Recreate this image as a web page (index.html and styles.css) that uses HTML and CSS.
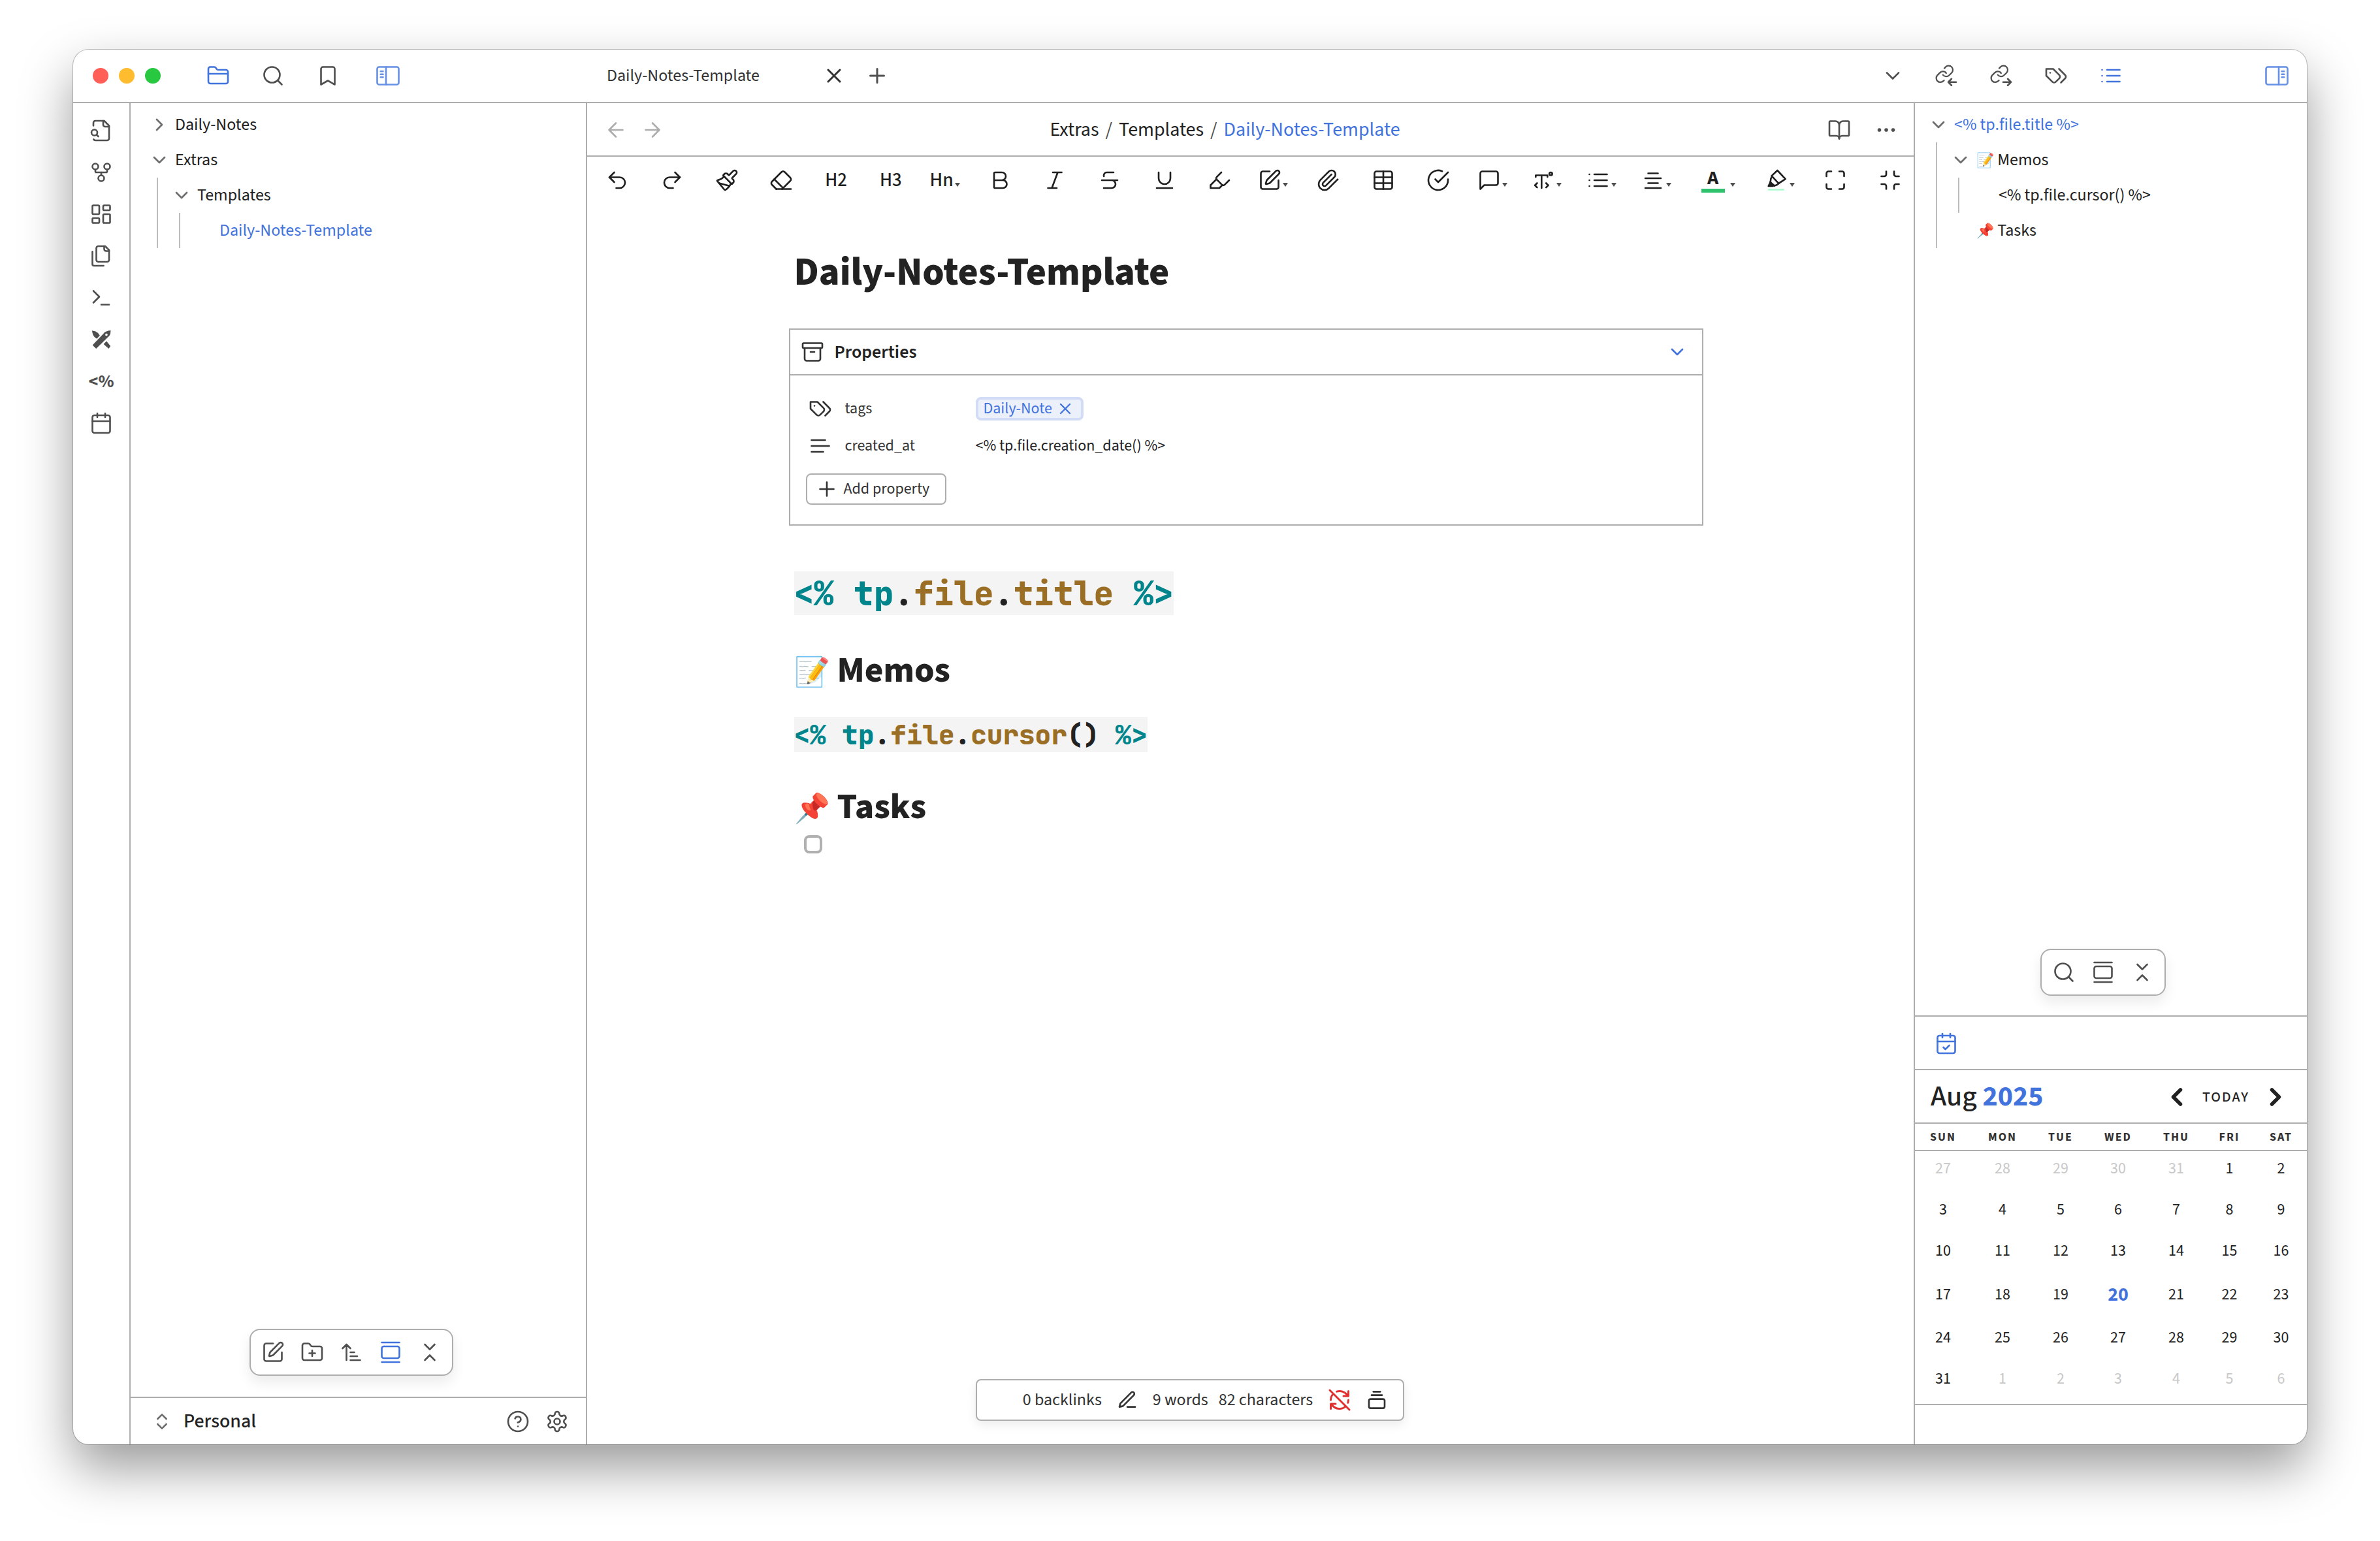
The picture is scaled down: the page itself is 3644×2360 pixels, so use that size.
FILE: index.html
```html
<!DOCTYPE html>
<html lang="en">
<head>
<meta charset="utf-8">
<title>Daily-Notes-Template - Personal</title>
<meta name="viewport" content="width=device-width, initial-scale=1">
<link rel="stylesheet" href="styles.css">
</head>
<body>
<svg class="sprite" aria-hidden="true">
  <symbol id="folder" viewBox="0 0 24 24"><path d="M20 20a2 2 0 0 0 2-2V8a2 2 0 0 0-2-2h-7.9a2 2 0 0 1-1.69-.9L9.6 3.9A2 2 0 0 0 7.93 3H4a2 2 0 0 0-2 2v13a2 2 0 0 0 2 2Z"/><path d="M2 10h20"/></symbol>
  <symbol id="search" viewBox="0 0 24 24"><circle cx="11" cy="11" r="8"/><path d="m21 21-4.3-4.3"/></symbol>
  <symbol id="bookmark" viewBox="0 0 24 24"><path d="m19 21-7-4-7 4V5a2 2 0 0 1 2-2h10a2 2 0 0 1 2 2v16z"/></symbol>
  <symbol id="sidebar-left" viewBox="0 0 24 24"><rect x="1" y="3" width="22" height="18" rx="2"/><path d="M10 3v18M4.5 7.5H7M4.5 10.5H7M4.5 13.5H7"/></symbol>
  <symbol id="sidebar-right" viewBox="0 0 24 24"><rect x="1" y="3" width="22" height="18" rx="2"/><path d="M14 3v18M17 7.5h2.5M17 10.5h2.5M17 13.5h2.5"/></symbol>
  <symbol id="x" viewBox="0 0 24 24"><path d="M18 6 6 18M6 6l12 12"/></symbol>
  <symbol id="plus" viewBox="0 0 24 24"><path d="M5 12h14M12 5v14"/></symbol>
  <symbol id="chevron-down" viewBox="0 0 24 24"><path d="m6 9 6 6 6-6"/></symbol>
  <symbol id="chevron-right" viewBox="0 0 24 24"><path d="m9 18 6-6-6-6"/></symbol>
  <symbol id="chevron-left" viewBox="0 0 24 24"><path d="m15 18-6-6 6-6"/></symbol>
  <symbol id="link-in" viewBox="0 0 24 24"><g transform="scale(.85)"><path d="M10 13a5 5 0 0 0 7.54.54l3-3a5 5 0 0 0-7.07-7.07l-1.72 1.71"/><path d="M14 11a5 5 0 0 0-7.54-.54l-3 3a5 5 0 0 0 7.07 7.07l.9-.9"/></g><path d="M22 18.5h-8M17.3 15.2 14 18.5l3.3 3.3"/></symbol>
  <symbol id="link-out" viewBox="0 0 24 24"><g transform="scale(.85)"><path d="M10 13a5 5 0 0 0 7.54.54l3-3a5 5 0 0 0-7.07-7.07l-1.72 1.71"/><path d="M14 11a5 5 0 0 0-7.54-.54l-3 3a5 5 0 0 0 7.07 7.07l.9-.9"/></g><path d="M14 18.5h8M18.7 15.2l3.3 3.3-3.3 3.3"/></symbol>
  <symbol id="tags" viewBox="0 0 24 24"><path d="M9 5H2v7l6.29 6.29c.94.94 2.48.94 3.42 0l3.58-3.58c.94-.94.94-2.48 0-3.42L9 5Z"/><path d="M6 9.01V9"/><path d="m15 5 6.3 6.3a2.4 2.4 0 0 1 0 3.4L17 19"/></symbol>
  <symbol id="list" viewBox="0 0 24 24"><path d="M8 6h13M8 12h13M8 18h13M3 6h.01M3 12h.01M3 18h.01"/></symbol>
  <symbol id="file-search" viewBox="0 0 24 24"><path d="M14 2v4a2 2 0 0 0 2 2h4"/><path d="M4.27 21a2 2 0 0 0 1.73 1h12a2 2 0 0 0 2-2V7l-5-5H6a2 2 0 0 0-2 2v3"/><path d="m9 18-1.5-1.5"/><circle cx="5" cy="14" r="3"/></symbol>
  <symbol id="fork" viewBox="0 0 24 24"><circle cx="12" cy="18" r="3"/><circle cx="6" cy="6" r="3"/><circle cx="18" cy="6" r="3"/><path d="M18 9v2c0 .6-.4 1-1 1H7c-.6 0-1-.4-1-1V9"/><path d="M12 12v3"/></symbol>
  <symbol id="dashboard" viewBox="0 0 24 24"><rect x="3" y="3" width="7" height="9" rx="1"/><rect x="14" y="3" width="7" height="5" rx="1"/><rect x="14" y="12" width="7" height="9" rx="1"/><rect x="3" y="16" width="7" height="5" rx="1"/></symbol>
  <symbol id="files" viewBox="0 0 24 24"><path d="M20 7h-3a2 2 0 0 1-2-2V2"/><path d="M9 18a2 2 0 0 1-2-2V4a2 2 0 0 1 2-2h7l4 4v10a2 2 0 0 1-2 2Z"/><path d="M3 7.6v12.8A1.6 1.6 0 0 0 4.6 22h9.8"/></symbol>
  <symbol id="terminal" viewBox="0 0 24 24"><path d="m4 17 6-6-6-6M12 19h8"/></symbol>
  <symbol id="pens" viewBox="0 0 24 24"><g fill="currentColor" stroke="none"><path fill-rule="evenodd" d="M3.1 17.6 14.6 5.6Q16 3.2 21.6 2.6 21.8 8 18.4 10L6.8 21.4zM17.3 5.9a1.2 1.2 0 1 0 .01 0z"/><path d="M2.7 2.9Q8.5 3.5 10.6 7.8L7.6 11.2Q3 9 2.7 2.9zM14.4 16.6l3-3 4.1 5-1.9 2.7z"/></g></symbol>
  <symbol id="calendar" viewBox="0 0 24 24"><path d="M8 2v4M16 2v4M3 10h18"/><rect x="3" y="4" width="18" height="18" rx="2"/></symbol>
  <symbol id="calendar-check" viewBox="0 0 24 24"><path d="M8 2v4M16 2v4M3 10h18M9 16l2 2 4-4"/><rect x="3" y="4" width="18" height="18" rx="2"/></symbol>
  <symbol id="arrow-left" viewBox="0 0 24 24"><path d="m12 19-7-7 7-7M19 12H5"/></symbol>
  <symbol id="arrow-right" viewBox="0 0 24 24"><path d="M5 12h14M12 5l7 7-7 7"/></symbol>
  <symbol id="book" viewBox="0 0 24 24"><path d="M12 7v14"/><path d="M3 18a1 1 0 0 1-1-1V4a1 1 0 0 1 1-1h5a4 4 0 0 1 4 4 4 4 0 0 1 4-4h5a1 1 0 0 1 1 1v13a1 1 0 0 1-1 1h-6a3 3 0 0 0-3 3 3 3 0 0 0-3-3z"/></symbol>
  <symbol id="more" viewBox="0 0 24 24"><g fill="currentColor"><circle cx="12" cy="12" r="1"/><circle cx="19" cy="12" r="1"/><circle cx="5" cy="12" r="1"/></g></symbol>
  <symbol id="undo" viewBox="0 0 24 24"><path d="M9 14 4 9l5-5"/><path d="M4 9h10.5a5.5 5.5 0 0 1 0 11H11"/></symbol>
  <symbol id="redo" viewBox="0 0 24 24"><path d="m15 14 5-5-5-5"/><path d="M20 9H9.5a5.5 5.5 0 0 0 0 11H13"/></symbol>
  <symbol id="brush" viewBox="0 0 24 24"><path d="m14.622 17.897-10.68-2.913"/><path d="M18.376 2.622a1 1 0 1 1 3.002 3.002L17.36 9.643a.5.5 0 0 0 0 .707l.944.944a2.41 2.41 0 0 1 0 3.408l-.944.944a.5.5 0 0 1-.707 0L8.354 7.348a.5.5 0 0 1 0-.707l.944-.944a2.41 2.41 0 0 1 3.408 0l.944.944a.5.5 0 0 0 .707 0z"/><path d="M9 8c-1.804 2.71-3.97 3.46-6.583 3.948a.507.507 0 0 0-.302.819l7.32 8.883a1 1 0 0 0 1.185.204C12.735 20.405 16 16.792 16 15"/></symbol>
  <symbol id="eraser" viewBox="0 0 24 24"><path d="m7 21-4.3-4.3c-1-1-1-2.5 0-3.4l9.6-9.6c1-1 2.5-1 3.4 0l5.6 5.6c1 1 1 2.5 0 3.4L13 21"/><path d="M22 21H7M5 11l9 9"/></symbol>
  <symbol id="bold" viewBox="0 0 24 24"><path d="M6 12h9a4 4 0 0 1 0 8H7a1 1 0 0 1-1-1V5a1 1 0 0 1 1-1h7a4 4 0 0 1 0 8"/></symbol>
  <symbol id="italic" viewBox="0 0 24 24"><path d="M19 4h-9M14 20H5M15 4 9 20"/></symbol>
  <symbol id="strike" viewBox="0 0 24 24"><path d="M16 4H9a3 3 0 0 0-2.83 4M14 12a4 4 0 0 1 0 8H6M4 12h16"/></symbol>
  <symbol id="underline" viewBox="0 0 24 24"><path d="M6 4v6a6 6 0 0 0 12 0V4M4 20h16"/></symbol>
  <symbol id="highlighter" viewBox="0 0 24 24"><path d="m9 11-6 6v3h9l3-3"/><path d="m22 12-4.6 4.6a2 2 0 0 1-2.8 0l-5.2-5.2a2 2 0 0 1 0-2.8L14 4"/></symbol>
  <symbol id="edit" viewBox="0 0 24 24"><path d="M12 3H5a2 2 0 0 0-2 2v14a2 2 0 0 0 2 2h14a2 2 0 0 0 2-2v-7"/><path d="M18.375 2.625a1 1 0 0 1 3 3l-9.013 9.014a2 2 0 0 1-.853.505l-2.873.84a.5.5 0 0 1-.62-.62l.84-2.873a2 2 0 0 1 .506-.852z"/></symbol>
  <symbol id="clip" viewBox="0 0 24 24"><path d="m21.44 11.05-9.19 9.19a6 6 0 0 1-8.49-8.49l8.57-8.57A4 4 0 1 1 18 8.84l-8.59 8.57a2 2 0 0 1-2.83-2.83l8.49-8.48"/></symbol>
  <symbol id="table" viewBox="0 0 24 24"><rect x="3" y="3" width="18" height="18" rx="2"/><path d="M12 3v18M3 9h18M3 15h18"/></symbol>
  <symbol id="check" viewBox="0 0 24 24"><path d="M22 11.08V12a10 10 0 1 1-5.93-9.14M9 11l3 3L22 4"/></symbol>
  <symbol id="comment" viewBox="0 0 24 24"><path d="M21 15a2 2 0 0 1-2 2H7l-4 4V5a2 2 0 0 1 2-2h14a2 2 0 0 1 2 2z"/></symbol>
  <symbol id="text-style" viewBox="0 0 24 24"><path d="M4.2 8.6V7h12v1.600M10.200 7v13M5.600 15l-2.200 2.200 2.200 2.200M14.800 15l2.200 2.200-2.200 2.200"/><circle cx="19.600" cy="5.500" r="1.500"/></symbol>
  <symbol id="align-center" viewBox="0 0 24 24"><path d="M7 5h10M4 10h16M7 15h10M4 20h16"/></symbol>
  <symbol id="marker" viewBox="0 0 24 24"><path d="m12.9 2 8.2 8.7-6.9 4.6L7 7.6z"/><path d="M7.2 8.5c-1.8 2.6-.6 3.4-1.6 5.4l4.2 3.9c1.6-1 2.4-.2 4.4-2.5"/><path fill="currentColor" d="M5.6 14.2 3.8 18h4.4l1-1z"/><path class="marker-bar" d="M4 21.6h15"/></symbol>
  <symbol id="maximize" viewBox="0 0 24 24"><path d="M8 3H5a2 2 0 0 0-2 2v3M21 8V5a2 2 0 0 0-2-2h-3M3 16v3a2 2 0 0 0 2 2h3M16 21h3a2 2 0 0 0 2-2v-3"/></symbol>
  <symbol id="minimize" viewBox="0 0 24 24"><path d="M8 3v3a2 2 0 0 1-2 2H3M21 8h-3a2 2 0 0 1-2-2V3M3 16h3a2 2 0 0 1 2 2v3M16 21v-3a2 2 0 0 1 2-2h3"/></symbol>
  <symbol id="archive" viewBox="0 0 24 24"><rect x="2" y="3" width="20" height="5" rx="1"/><path d="M4 8v11a2 2 0 0 0 2 2h12a2 2 0 0 0 2-2V8M10 12h4"/></symbol>
  <symbol id="lines" viewBox="0 0 24 24"><path d="M17 6H3M21 12H3M15 18H3"/></symbol>
  <symbol id="folder-plus" viewBox="0 0 24 24"><path d="M12 10v6M9 13h6"/><path d="M20 20a2 2 0 0 0 2-2V8a2 2 0 0 0-2-2h-7.9a2 2 0 0 1-1.69-.9L9.6 3.9A2 2 0 0 0 7.93 3H4a2 2 0 0 0-2 2v13a2 2 0 0 0 2 2Z"/></symbol>
  <symbol id="sort" viewBox="0 0 24 24"><path d="m3 8 4-4 4 4M7 4v16M11 12h4M11 16h7M11 20h10"/></symbol>
  <symbol id="gallery" viewBox="0 0 24 24"><path d="M3 2h18M3 22h18"/><rect x="3" y="6" width="18" height="12" rx="2"/></symbol>
  <symbol id="collapse" viewBox="0 0 24 24"><path d="m7 20 5-5 5 5M7 4l5 5 5-5"/></symbol>
  <symbol id="up-down" viewBox="0 0 24 24"><path d="m7 15 5 5 5-5M7 9l5-5 5 5"/></symbol>
  <symbol id="help" viewBox="0 0 24 24"><circle cx="12" cy="12" r="10"/><path d="M9.09 9a3 3 0 0 1 5.83 1c0 2-3 3-3 3M12 17h.01"/></symbol>
  <symbol id="gear" viewBox="0 0 24 24"><path d="M12.22 2h-.44a2 2 0 0 0-2 2v.18a2 2 0 0 1-1 1.73l-.43.25a2 2 0 0 1-2 0l-.15-.08a2 2 0 0 0-2.73.73l-.22.38a2 2 0 0 0 .73 2.73l.15.1a2 2 0 0 1 1 1.72v.51a2 2 0 0 1-1 1.74l-.15.09a2 2 0 0 0-.73 2.73l.22.38a2 2 0 0 0 2.73.73l.15-.08a2 2 0 0 1 2 0l.43.25a2 2 0 0 1 1 1.73V20a2 2 0 0 0 2 2h.44a2 2 0 0 0 2-2v-.18a2 2 0 0 1 1-1.73l.43-.25a2 2 0 0 1 2 0l.15.08a2 2 0 0 0 2.73-.73l.22-.39a2 2 0 0 0-.73-2.73l-.15-.08a2 2 0 0 1-1-1.74v-.5a2 2 0 0 1 1-1.74l.15-.09a2 2 0 0 0 .73-2.73l-.22-.38a2 2 0 0 0-2.73-.73l-.15.08a2 2 0 0 1-2 0l-.43-.25a2 2 0 0 1-1-1.73V4a2 2 0 0 0-2-2z"/><circle cx="12" cy="12" r="3"/></symbol>
  <symbol id="pencil" viewBox="0 0 24 24"><path d="M12 20h9M16.5 3.5a2.12 2.12 0 0 1 3 3L7 19l-4 1 1-4Z"/></symbol>
  <symbol id="sync-off" viewBox="0 0 24 24"><path d="M21 8 18.74 5.74A9.75 9.75 0 0 0 12 3c-1 0-1.97.16-2.87.47M8 16H3v5M3 12c0-2.49 1-4.74 2.64-6.36M3 16l2.26 2.26A9.75 9.75 0 0 0 12 21c2.49 0 4.74-1 6.36-2.64M21 12c0 1-.16 1.97-.47 2.87M21 3v5h-5M22 22 2 2"/></symbol>
  <symbol id="stack" viewBox="0 0 24 24"><path d="M8 2.5h8M6 6.5h12"/><rect x="3" y="11" width="18" height="10.5" rx="2"/></symbol>
</svg>

<div class="window">
  <header class="titlebar">
    <div class="titlebar-left">
      <div class="lights"><button class="light light-close" aria-label="Close window"></button><button class="light light-min" aria-label="Minimize window"></button><button class="light light-max" aria-label="Zoom window"></button></div>
      <nav class="pane-tabs" aria-label="Left sidebar tabs">
        <button class="icon-button accent" aria-label="Files"><svg class="icon"><use href="#folder"/></svg></button>
        <button class="icon-button" aria-label="Search"><svg class="icon"><use href="#search"/></svg></button>
        <button class="icon-button" aria-label="Bookmarks"><svg class="icon"><use href="#bookmark"/></svg></button>
      </nav>
      <button class="icon-button toggle" aria-label="Collapse left sidebar"><svg class="icon"><use href="#sidebar-left"/></svg></button>
    </div>
    <div class="titlebar-center">
      <div class="tab"><span class="tab-title">Daily-Notes-Template</span><button class="tab-close" aria-label="Close tab"><svg class="icon"><use href="#x"/></svg></button></div>
      <button class="new-tab" aria-label="New tab"><svg class="icon"><use href="#plus"/></svg></button>
      <button class="tab-list" aria-label="Tab list"><svg class="icon"><use href="#chevron-down"/></svg></button>
    </div>
    <div class="titlebar-right">
      <button class="icon-button" aria-label="Backlinks"><svg class="icon"><use href="#link-in"/></svg></button>
      <button class="icon-button" aria-label="Outgoing links"><svg class="icon"><use href="#link-out"/></svg></button>
      <button class="icon-button" aria-label="Tags"><svg class="icon"><use href="#tags"/></svg></button>
      <button class="icon-button accent" aria-label="Outline"><svg class="icon"><use href="#list"/></svg></button>
      <button class="icon-button toggle toggle-right" aria-label="Collapse right sidebar"><svg class="icon"><use href="#sidebar-right"/></svg></button>
    </div>
  </header>

  <div class="workspace">
    <nav class="ribbon" aria-label="Ribbon">
      <button class="ribbon-button" aria-label="Open quick switcher"><svg class="icon"><use href="#file-search"/></svg></button>
      <button class="ribbon-button" aria-label="Open graph view"><svg class="icon"><use href="#fork"/></svg></button>
      <button class="ribbon-button" aria-label="Create new canvas"><svg class="icon"><use href="#dashboard"/></svg></button>
      <button class="ribbon-button" aria-label="Insert template"><svg class="icon"><use href="#files"/></svg></button>
      <button class="ribbon-button" aria-label="Open command palette"><svg class="icon"><use href="#terminal"/></svg></button>
      <button class="ribbon-button" aria-label="New drawing"><svg class="icon"><use href="#pens"/></svg></button>
      <button class="ribbon-button" aria-label="Templater">&lt;%</button>
      <button class="ribbon-button" aria-label="Open today's daily note"><svg class="icon"><use href="#calendar"/></svg></button>
    </nav>

    <aside class="sidebar sidebar-left">
      <ul class="tree">
        <li><button class="tree-row"><svg class="icon chevron"><use href="#chevron-right"/></svg>Daily-Notes</button></li>
        <li><button class="tree-row"><svg class="icon chevron"><use href="#chevron-down"/></svg>Extras</button>
          <ul class="tree-children">
            <li><button class="tree-row"><svg class="icon chevron"><use href="#chevron-down"/></svg>Templates</button>
              <ul class="tree-children">
                <li><a class="tree-row leaf accent" href="#note">Daily-Notes-Template</a></li>
              </ul>
            </li>
          </ul>
        </li>
      </ul>
      <div class="float-bar float-bar-left">
        <button class="float-button" aria-label="New note"><svg class="icon"><use href="#edit"/></svg></button>
        <button class="float-button" aria-label="New folder"><svg class="icon"><use href="#folder-plus"/></svg></button>
        <button class="float-button" aria-label="Change sort order"><svg class="icon"><use href="#sort"/></svg></button>
        <button class="float-button accent" aria-label="Auto-reveal current file"><svg class="icon"><use href="#gallery"/></svg></button>
        <button class="float-button" aria-label="Collapse all"><svg class="icon"><use href="#collapse"/></svg></button>
      </div>
      <footer class="vault">
        <button class="vault-switch"><svg class="icon chevron"><use href="#up-down"/></svg>Personal</button>
        <button class="float-button" aria-label="Help"><svg class="icon"><use href="#help"/></svg></button>
        <button class="float-button" aria-label="Settings"><svg class="icon"><use href="#gear"/></svg></button>
      </footer>
    </aside>

    <main class="center">
      <div class="view-header">
        <div class="history"><button class="history-button" aria-label="Back" disabled><svg class="icon"><use href="#arrow-left"/></svg></button><button class="history-button" aria-label="Forward" disabled><svg class="icon"><use href="#arrow-right"/></svg></button></div>
        <nav class="breadcrumb" aria-label="Path"><a href="#extras">Extras</a><span class="slash">/</span><a href="#templates">Templates</a><span class="slash">/</span><a class="accent" href="#note">Daily-Notes-Template</a></nav>
        <div class="view-actions"><button class="view-button" aria-label="Reading view"><svg class="icon"><use href="#book"/></svg></button><button class="view-button" aria-label="More options"><svg class="icon"><use href="#more"/></svg></button></div>
      </div>
      <div class="format-bar" role="toolbar" aria-label="Formatting">
        <button class="format-button" aria-label="Undo"><svg class="icon"><use href="#undo"/></svg></button>
        <button class="format-button" aria-label="Redo"><svg class="icon"><use href="#redo"/></svg></button>
        <button class="format-button" aria-label="Format brush"><svg class="icon"><use href="#brush"/></svg></button>
        <button class="format-button" aria-label="Clear formatting"><svg class="icon"><use href="#eraser"/></svg></button>
        <button class="format-button">H2</button>
        <button class="format-button">H3</button>
        <button class="format-button has-menu">Hn<span class="caret"></span></button>
        <button class="format-button" aria-label="Bold"><svg class="icon"><use href="#bold"/></svg></button>
        <button class="format-button" aria-label="Italic"><svg class="icon"><use href="#italic"/></svg></button>
        <button class="format-button" aria-label="Strikethrough"><svg class="icon"><use href="#strike"/></svg></button>
        <button class="format-button" aria-label="Underline"><svg class="icon"><use href="#underline"/></svg></button>
        <button class="format-button" aria-label="Highlight"><svg class="icon"><use href="#highlighter"/></svg></button>
        <button class="format-button" aria-label="Insert"><svg class="icon"><use href="#edit"/></svg><span class="caret"></span></button>
        <button class="format-button" aria-label="Attach file"><svg class="icon"><use href="#clip"/></svg></button>
        <button class="format-button" aria-label="Insert table"><svg class="icon"><use href="#table"/></svg></button>
        <button class="format-button" aria-label="Task"><svg class="icon"><use href="#check"/></svg></button>
        <button class="format-button" aria-label="Callout"><svg class="icon"><use href="#comment"/></svg><span class="caret"></span></button>
        <button class="format-button" aria-label="Text style"><svg class="icon"><use href="#text-style"/></svg><span class="caret"></span></button>
        <button class="format-button" aria-label="List"><svg class="icon"><use href="#list"/></svg><span class="caret"></span></button>
        <button class="format-button" aria-label="Align"><svg class="icon"><use href="#align-center"/></svg><span class="caret"></span></button>
        <button class="format-button wide" aria-label="Font colour"><span class="font-color">A</span><span class="caret"></span></button>
        <button class="format-button" aria-label="Background colour"><svg class="icon"><use href="#marker"/></svg><span class="caret"></span></button>
        <button class="format-button" aria-label="Full screen"><svg class="icon"><use href="#maximize"/></svg></button>
        <button class="format-button" aria-label="Exit full screen"><svg class="icon"><use href="#minimize"/></svg></button>
      </div>

      <article class="note" id="note">
        <h1 class="note-title">Daily-Notes-Template</h1>
        <section class="properties">
          <button class="properties-head"><svg class="icon"><use href="#archive"/></svg><span class="properties-title">Properties</span><svg class="icon chevron accent"><use href="#chevron-down"/></svg></button>
          <div class="properties-body">
            <div class="property"><svg class="icon"><use href="#tags"/></svg><span class="property-name">tags</span><span class="pill">Daily-Note<button class="pill-remove" aria-label="Remove tag"><svg class="icon"><use href="#x"/></svg></button></span></div>
            <div class="property"><svg class="icon"><use href="#lines"/></svg><label class="property-name" for="created">created_at</label><input class="property-value" id="created" type="text" value="&lt;% tp.file.creation_date() %&gt;"></div>
            <button class="add-property"><svg class="icon"><use href="#plus"/></svg>Add property</button>
          </div>
        </section>
        <h1 class="code-heading"><code class="code"><span class="tok-tag">&lt;%</span> <span class="tok-tag">tp</span>.<span class="tok-prop">file</span>.<span class="tok-prop">title</span> <span class="tok-tag">%&gt;</span></code></h1>
        <h2 class="heading heading-memos"><span class="emoji">📝</span> Memos</h2>
        <h3 class="code-subheading"><code class="code"><span class="tok-tag">&lt;%</span> <span class="tok-tag">tp</span>.<span class="tok-prop">file</span>.<span class="tok-prop">cursor</span>() <span class="tok-tag">%&gt;</span></code></h3>
        <h2 class="heading heading-tasks"><span class="emoji">📌</span> Tasks</h2>
        <input class="task" type="checkbox" aria-label="Empty task">
      </article>
    </main>

    <aside class="sidebar sidebar-right">
      <ul class="tree outline">
        <li><button class="tree-row accent"><svg class="icon chevron"><use href="#chevron-down"/></svg>&lt;% tp.file.title %&gt;</button>
          <ul class="tree-children">
            <li><button class="tree-row"><svg class="icon chevron"><use href="#chevron-down"/></svg><span><span class="emoji">📝</span> Memos</span></button>
              <ul class="tree-children">
                <li><a class="tree-row leaf" href="#note">&lt;% tp.file.cursor() %&gt;</a></li>
              </ul>
            </li>
            <li><a class="tree-row leaf" href="#note"><span><span class="emoji">📌</span> Tasks</span></a></li>
          </ul>
        </li>
      </ul>
      <div class="float-bar float-bar-right">
        <button class="float-button" aria-label="Search headings"><svg class="icon"><use href="#search"/></svg></button>
        <button class="float-button" aria-label="Auto-scroll"><svg class="icon"><use href="#gallery"/></svg></button>
        <button class="float-button" aria-label="Collapse all"><svg class="icon"><use href="#collapse"/></svg></button>
      </div>
      <div class="calendar-tabs"><button class="icon-button accent" aria-label="Calendar"><svg class="icon"><use href="#calendar-check"/></svg></button></div>
      <div class="calendar-head">
        <h2 class="month">Aug <span class="year">2025</span></h2>
        <button class="month-step" aria-label="Previous month"><svg class="icon"><use href="#chevron-left"/></svg></button>
        <button class="today-button">TODAY</button>
        <button class="month-step" aria-label="Next month"><svg class="icon"><use href="#chevron-right"/></svg></button>
      </div>
      <table class="calendar">
        <colgroup><col class="col-sun"><col class="col-mon"><col class="col-tue"><col class="col-wed"><col class="col-thu"><col class="col-fri"><col class="col-sat"></colgroup>
        <thead><tr><th>SUN</th><th>MON</th><th>TUE</th><th>WED</th><th>THU</th><th>FRI</th><th>SAT</th></tr></thead>
        <tbody>
          <tr><td class="out">27</td><td class="out">28</td><td class="out">29</td><td class="out">30</td><td class="out">31</td><td>1</td><td>2</td></tr>
          <tr><td>3</td><td>4</td><td>5</td><td>6</td><td>7</td><td>8</td><td>9</td></tr>
          <tr><td>10</td><td>11</td><td>12</td><td>13</td><td>14</td><td>15</td><td>16</td></tr>
          <tr><td>17</td><td>18</td><td>19</td><td class="today">20</td><td>21</td><td>22</td><td>23</td></tr>
          <tr><td>24</td><td>25</td><td>26</td><td>27</td><td>28</td><td>29</td><td>30</td></tr>
          <tr><td>31</td><td class="out">1</td><td class="out">2</td><td class="out">3</td><td class="out">4</td><td class="out">5</td><td class="out">6</td></tr>
        </tbody>
      </table>
      <div class="sidebar-foot"></div>
    </aside>
  </div>

  <div class="status-bar" role="status">
    <span>0 backlinks</span>
    <svg class="icon icon-small"><use href="#pencil"/></svg>
    <span>9 words</span>
    <span class="status-chars">82 characters</span>
    <svg class="icon status-sync"><use href="#sync-off"/></svg>
    <svg class="icon icon-small"><use href="#stack"/></svg>
  </div>
</div>
</body>
</html>
```

FILE: styles.css
```css
:root {
  --line: #adadad;
  --guide: #bdbdbd;
  --text: #222222;
  --text-soft: #333333;
  --icon: #4f4f4f;
  --accent: #4273dc;
  --sans: "Source Sans 3", "Noto Sans CJK SC", "Noto Sans", sans-serif;
  --mono: "JetBrains Mono", "Liberation Mono", monospace;
}

* { box-sizing: border-box; }

body {
  margin: 0;
  min-height: 100vh;
  padding: 76px 112px 148px;
  display: flex;
  flex-direction: column;
  background: #ffffff;
  color: var(--text);
  font: 400 26px/34px var(--sans);
}

button, input { font: inherit; color: inherit; }

button {
  margin: 0;
  padding: 0;
  border: 0;
  background: none;
  display: flex;
  align-items: center;
  justify-content: center;
}

a { color: inherit; text-decoration: none; }
ul { list-style: none; margin: 0; padding: 0; }
h1, h2, h3 { margin: 0; }

.sprite { position: absolute; width: 0; height: 0; }

.icon {
  flex: none;
  width: 36px;
  height: 36px;
  fill: none;
  stroke: currentColor;
  stroke-width: 1.75;
  stroke-linecap: round;
  stroke-linejoin: round;
}
.icon-small { width: 32px; height: 32px; }

.chevron { width: 32px; height: 32px; color: #6e6e6e; stroke-width: 2; }

.window {
  position: relative;
  flex: 1;
  display: flex;
  flex-direction: column;
  border-radius: 24px;
  background: #ffffff;
  box-shadow: 0 0 0 1px rgba(0, 0, 0, .25), 0 36px 80px rgba(0, 0, 0, .4);
}

/* Title bar */
.titlebar {
  flex: none;
  display: flex;
  height: 82px;
  border-bottom: 2px solid var(--line);
  color: var(--icon);
}
.titlebar-left { flex: none; width: 787px; padding-left: 30px; display: flex; align-items: center; }
.lights { display: flex; gap: 16px; margin-right: 46px; }
.light { width: 24px; height: 24px; border-radius: 50%; }
.light-close { background: #ff5f57; }
.light-min { background: #febc2e; }
.light-max { background: #28c840; }
.pane-tabs { display: flex; margin-right: 8px; }
.icon-button { width: 84px; height: 64px; color: var(--icon); }
.accent, .icon-button.accent, .chevron.accent { color: var(--accent); }
.icon-button.toggle { color: #6790e4; }

.titlebar-center { flex: 1; display: flex; align-items: center; color: var(--text-soft); }
.tab { display: flex; align-items: center; width: 412px; padding: 0 16px 0 30px; }
.tab-title { flex: 1; text-align: left; }
.tab-close .icon { stroke-width: 2; }
.new-tab { margin-left: 14px; color: var(--icon); }
.new-tab .icon { stroke-width: 2; }
.tab-list { margin-left: auto; margin-right: 14px; color: var(--icon); }

.titlebar-right { flex: none; width: 602px; padding: 0 4px 0 8px; display: flex; align-items: center; }
.toggle-right { margin-left: auto; }

/* Workspace columns */
.workspace { flex: 1; display: flex; }
.ribbon { flex: none; width: 88px; padding-top: 10px; border-right: 2px solid var(--line); color: var(--icon); }
.ribbon-button { width: 86px; height: 64px; font-size: 28px; font-weight: 700; }

.sidebar { flex: none; display: flex; flex-direction: column; }
.sidebar-left { width: 699px; border-right: 2px solid var(--line); }
.sidebar-right { width: 602px; border-left: 2px solid var(--line); }

.tree { flex: 1; padding: 6px 0 0 28px; }
.outline { padding-left: 20px; }
.tree-row { display: flex; align-items: center; justify-content: flex-start; gap: 8px; height: 54px; }
.leaf { padding-left: 40px; }
.tree-children { margin-left: 12px; padding-left: 20px; border-left: 2px solid var(--guide); }
.tree .emoji { font-size: 22px; }

.float-bar {
  flex: none;
  align-self: center;
  display: flex;
  align-items: center;
  height: 72px;
  padding: 0 4px;
  border: 2px solid var(--line);
  border-radius: 16px;
  background: #ffffff;
  box-shadow: 0 10px 20px rgba(0, 0, 0, .08);
  color: var(--icon);
}
.float-bar-left { margin: 0 22px 32px 0; }
.float-bar-right { margin: 0 24px 30px 0; }
.float-button { width: 60px; height: 60px; color: var(--icon); }
.float-button.accent { color: var(--accent); }

.vault {
  flex: none;
  display: flex;
  align-items: center;
  height: 73px;
  padding: 0 14px 0 32px;
  border-top: 2px solid var(--line);
}
.vault-switch { margin-right: auto; gap: 17px; font-size: 30px; font-weight: 500; }

/* Centre pane */
.center { flex: 1; min-width: 0; display: flex; flex-direction: column; }
.view-header {
  flex: none;
  display: flex;
  align-items: center;
  height: 82px;
  padding: 2px 6px 0 16px;
  border-bottom: 2px solid var(--line);
}
.history { display: flex; }
.history-button { width: 56px; height: 56px; color: #adadad; }
.breadcrumb { flex: 1; display: flex; justify-content: center; font-size: 30px; line-height: 40px; }
.slash { margin: 0 10px; color: var(--icon); }
.view-actions { display: flex; justify-content: flex-end; width: 200px; color: var(--icon); }
.view-button { width: 72px; height: 56px; }

.format-bar { flex: none; display: flex; justify-content: space-between; align-items: center; height: 72px; padding: 0 6px 0 16px; color: #1f1f1f; }
.format-button { width: 60px; height: 48px; font-size: 29px; font-weight: 500; }
.format-button.wide { width: 82px; gap: 6px; }
.has-menu { font-size: 30px; }
.caret { width: 12px; height: 20px; display: flex; align-items: flex-end; justify-content: center; }
.caret::after { content: ""; border: 4px solid transparent; border-top: 6px solid var(--icon); border-bottom: 0; }
.font-color { width: 36px; border-bottom: 6px solid #2dc26b; font-size: 30px; font-weight: 700; line-height: 32px; }
.marker-bar { stroke: #affad1; }

/* Note */
.note { width: 100%; max-width: 1414px; margin: 0 auto; padding: 64px 14px 0 0; }
.note-title { padding-left: 8px; font-size: 60px; line-height: 84px; font-weight: 800; }
.properties { margin-top: 43px; border: 2px solid var(--line); }
.properties-head { width: 100%; height: 70px; padding: 0 22px 0 16px; gap: 16px; border-bottom: 2px solid var(--line); font-size: 28px; font-weight: 600; }
.properties-head > .icon:first-child { color: var(--text-soft); }
.properties-title { flex: 1; text-align: left; }
.properties-body { padding: 22px 24px 30px; font-size: 24px; color: var(--text-soft); }
.property { display: flex; align-items: center; height: 57px; padding-left: 4px; }
.property-name { width: 200px; margin-left: 20px; }
.property-value { flex: 1; margin: 0; padding: 0; border: 0; background: none; color: var(--text); outline: 0; }
.pill { display: flex; align-items: center; gap: 6px; height: 36px; padding: 0 10px 0 8px; border: 4px solid #d3dcf7; border-radius: 8px; background: #ebf0fb; color: var(--accent); }
.pill-remove .icon { width: 28px; height: 28px; stroke-width: 2; }
.add-property { gap: 8px; height: 48px; margin-top: 14px; padding: 0 24px 0 12px; border: 2px solid var(--line); border-radius: 8px; }

.code-heading, .code-subheading { padding-left: 8px; font-family: var(--mono); font-weight: 800; }
.code-heading { margin-top: 68px; font-size: 51px; line-height: 72px; }
.code-subheading { margin-top: 28px; font-size: 41px; line-height: 60px; }
.code { font-family: inherit; background: #f4f4f4; font-variant-ligatures: none; }
.tok-tag { color: #00858c; }
.tok-prop { color: #9a6f25; }
.heading { padding-left: 8px; font-size: 55px; line-height: 72px; font-weight: 800; }
.heading-memos { margin-top: 46px; }
.heading-tasks { margin-top: 45px; }
.heading .emoji { font-size: 44px; }
.task { appearance: none; display: block; width: 28px; height: 28px; margin: 3px 0 0 23px; border: 4px solid #b0b0b0; border-radius: 8px; }

/* Calendar */
.calendar-tabs { flex: none; display: flex; align-items: center; height: 84px; padding: 2px 0 0 6px; border-top: 2px solid var(--line); border-bottom: 2px solid var(--line); }
.calendar-head { flex: none; display: flex; align-items: center; height: 82px; padding: 2px 26px 0 24px; border-bottom: 2px solid var(--line); }
.month { margin-right: auto; font-size: 44px; line-height: 60px; font-weight: 500; }
.year { color: var(--accent); font-weight: 700; }
.month-step { width: 44px; height: 48px; }
.month-step .icon { width: 44px; height: 44px; stroke-width: 3; }
.today-button { margin: 0 18px 0 17px; font-size: 22px; font-weight: 500; letter-spacing: 2px; }
.calendar { flex: none; width: 100%; table-layout: fixed; border-collapse: collapse; margin-bottom: 2px; font-size: 24px; }
.calendar th { height: 41px; padding: 1px 0 0; border-bottom: 2px solid var(--line); font-size: 18px; line-height: 24px; font-weight: 700; letter-spacing: 2px; color: var(--text-soft); }
.calendar td { padding: 10px 0 19px; text-align: center; vertical-align: middle; }
.calendar .out { color: #c8c8c8; }
.calendar .today { font-size: 30px; line-height: 42px; font-weight: 700; padding-bottom: 18px; color: var(--accent); }
.col-sun { width: 86px; }
.col-mon { width: 96px; }
.col-tue { width: 82px; }
.col-wed { width: 94px; }
.col-thu { width: 84px; }
.col-fri { width: 79px; }
.col-sat { width: 79px; }
.sidebar-foot { flex: none; height: 62px; border-top: 2px solid var(--line); }

/* Status bar floats over the bottom of the window */
.status-bar {
  position: absolute;
  left: 0;
  right: 0;
  bottom: 36px;
  width: fit-content;
  margin: 0 auto;
  display: flex;
  align-items: center;
  gap: 23px;
  height: 64px;
  padding: 0 24px 0 70px;
  border: 2px solid var(--line);
  border-radius: 8px;
  background: #ffffff;
  box-shadow: 0 6px 16px rgba(0, 0, 0, .08);
  color: var(--text-soft);
}
.status-bar .icon { stroke-width: 2; }
.status-chars { margin-left: -7px; }
.status-bar .status-sync { color: #e03131; }
```
